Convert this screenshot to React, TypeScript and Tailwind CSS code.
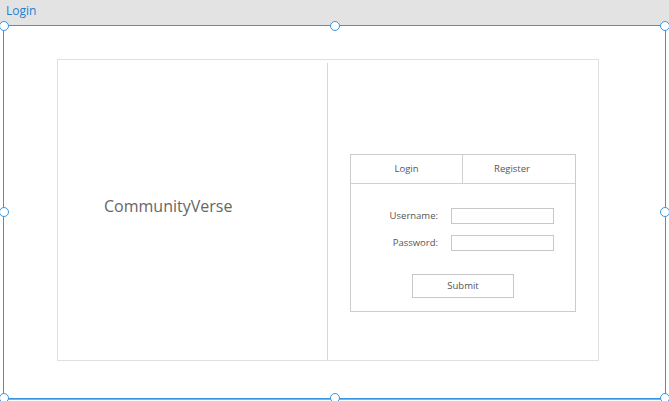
const FONT = { fontFamily: '"Open Sans", "Noto Sans", Arial, sans-serif' };

const HANDLES = [
  'left-0 top-0',
  'left-1/2 top-0',
  'left-full top-0',
  'left-0 top-1/2',
  'left-full top-1/2',
  'left-0 top-full',
  'left-1/2 top-full',
  'left-full top-full',
];

function Field({ label }: { label: string }) {
  return (
    <div className="flex items-center pl-[27px] gap-[13px]">
      <span className="w-[60px] text-right text-[9.5px] text-[#555]">{label}</span>
      <div className="w-[103px] h-[16px] border border-[#c8c8c8] bg-white" />
    </div>
  );
}

export default function App() {
  return (
    <div className="w-[669px] h-[401px] bg-white overflow-hidden" style={FONT}>
      {/* Tab strip */}
      <div className="h-[25px] bg-[#e3e3e3] flex items-start pl-[6px] pt-[2px]">
        <span className="text-[12px] text-[#1e7fd3]">Login</span>
      </div>

      {/* Selected canvas */}
      <div className="relative mx-[3px] h-[374px] border border-[#3795e3] bg-white">
        <div className="pt-[33px] pl-[53px]">
          <div className="w-[542px] h-[302px] border border-[#e0e0e0] pt-[3px] flex">
            <div className="w-[269px] flex items-center pl-[46px] pb-[11px]">
              <span className="text-[16px] text-[#666]">CommunityVerse</span>
            </div>
            <div className="flex-1 border-l border-[#d6d6d6] pl-[22px] pt-[91px]">
              <div className="w-[226px] h-[158px] border border-[#cccccc] flex flex-col">
                <div className="grid grid-cols-2 h-[29px] border-b border-[#d0d0d0] text-[9.5px] text-[#555]">
                  <div className="flex items-center justify-center border-r border-[#d0d0d0]">Login</div>
                  <div className="flex items-center justify-center">
                    <span className="mr-[14px]">Register</span>
                  </div>
                </div>
                <div className="flex flex-col gap-[11px] pt-[24px]">
                  <Field label="Username:" />
                  <Field label="Password:" />
                </div>
                <div className="flex justify-center pt-[23px]">
                  <div className="w-[102px] h-[24px] border border-[#c8c8c8] flex items-center justify-center text-[9.5px] text-[#555]">
                    Submit
                  </div>
                </div>
              </div>
            </div>
          </div>
        </div>

        {HANDLES.map((pos) => (
          <div
            key={pos}
            className={`absolute ${pos} w-[10px] h-[10px] -translate-x-1/2 -translate-y-1/2 rounded-full border border-[#3795e3] bg-white`}
          />
        ))}
      </div>
      <div className="h-px bg-[#a8a8a8]" />
    </div>
  );
}
